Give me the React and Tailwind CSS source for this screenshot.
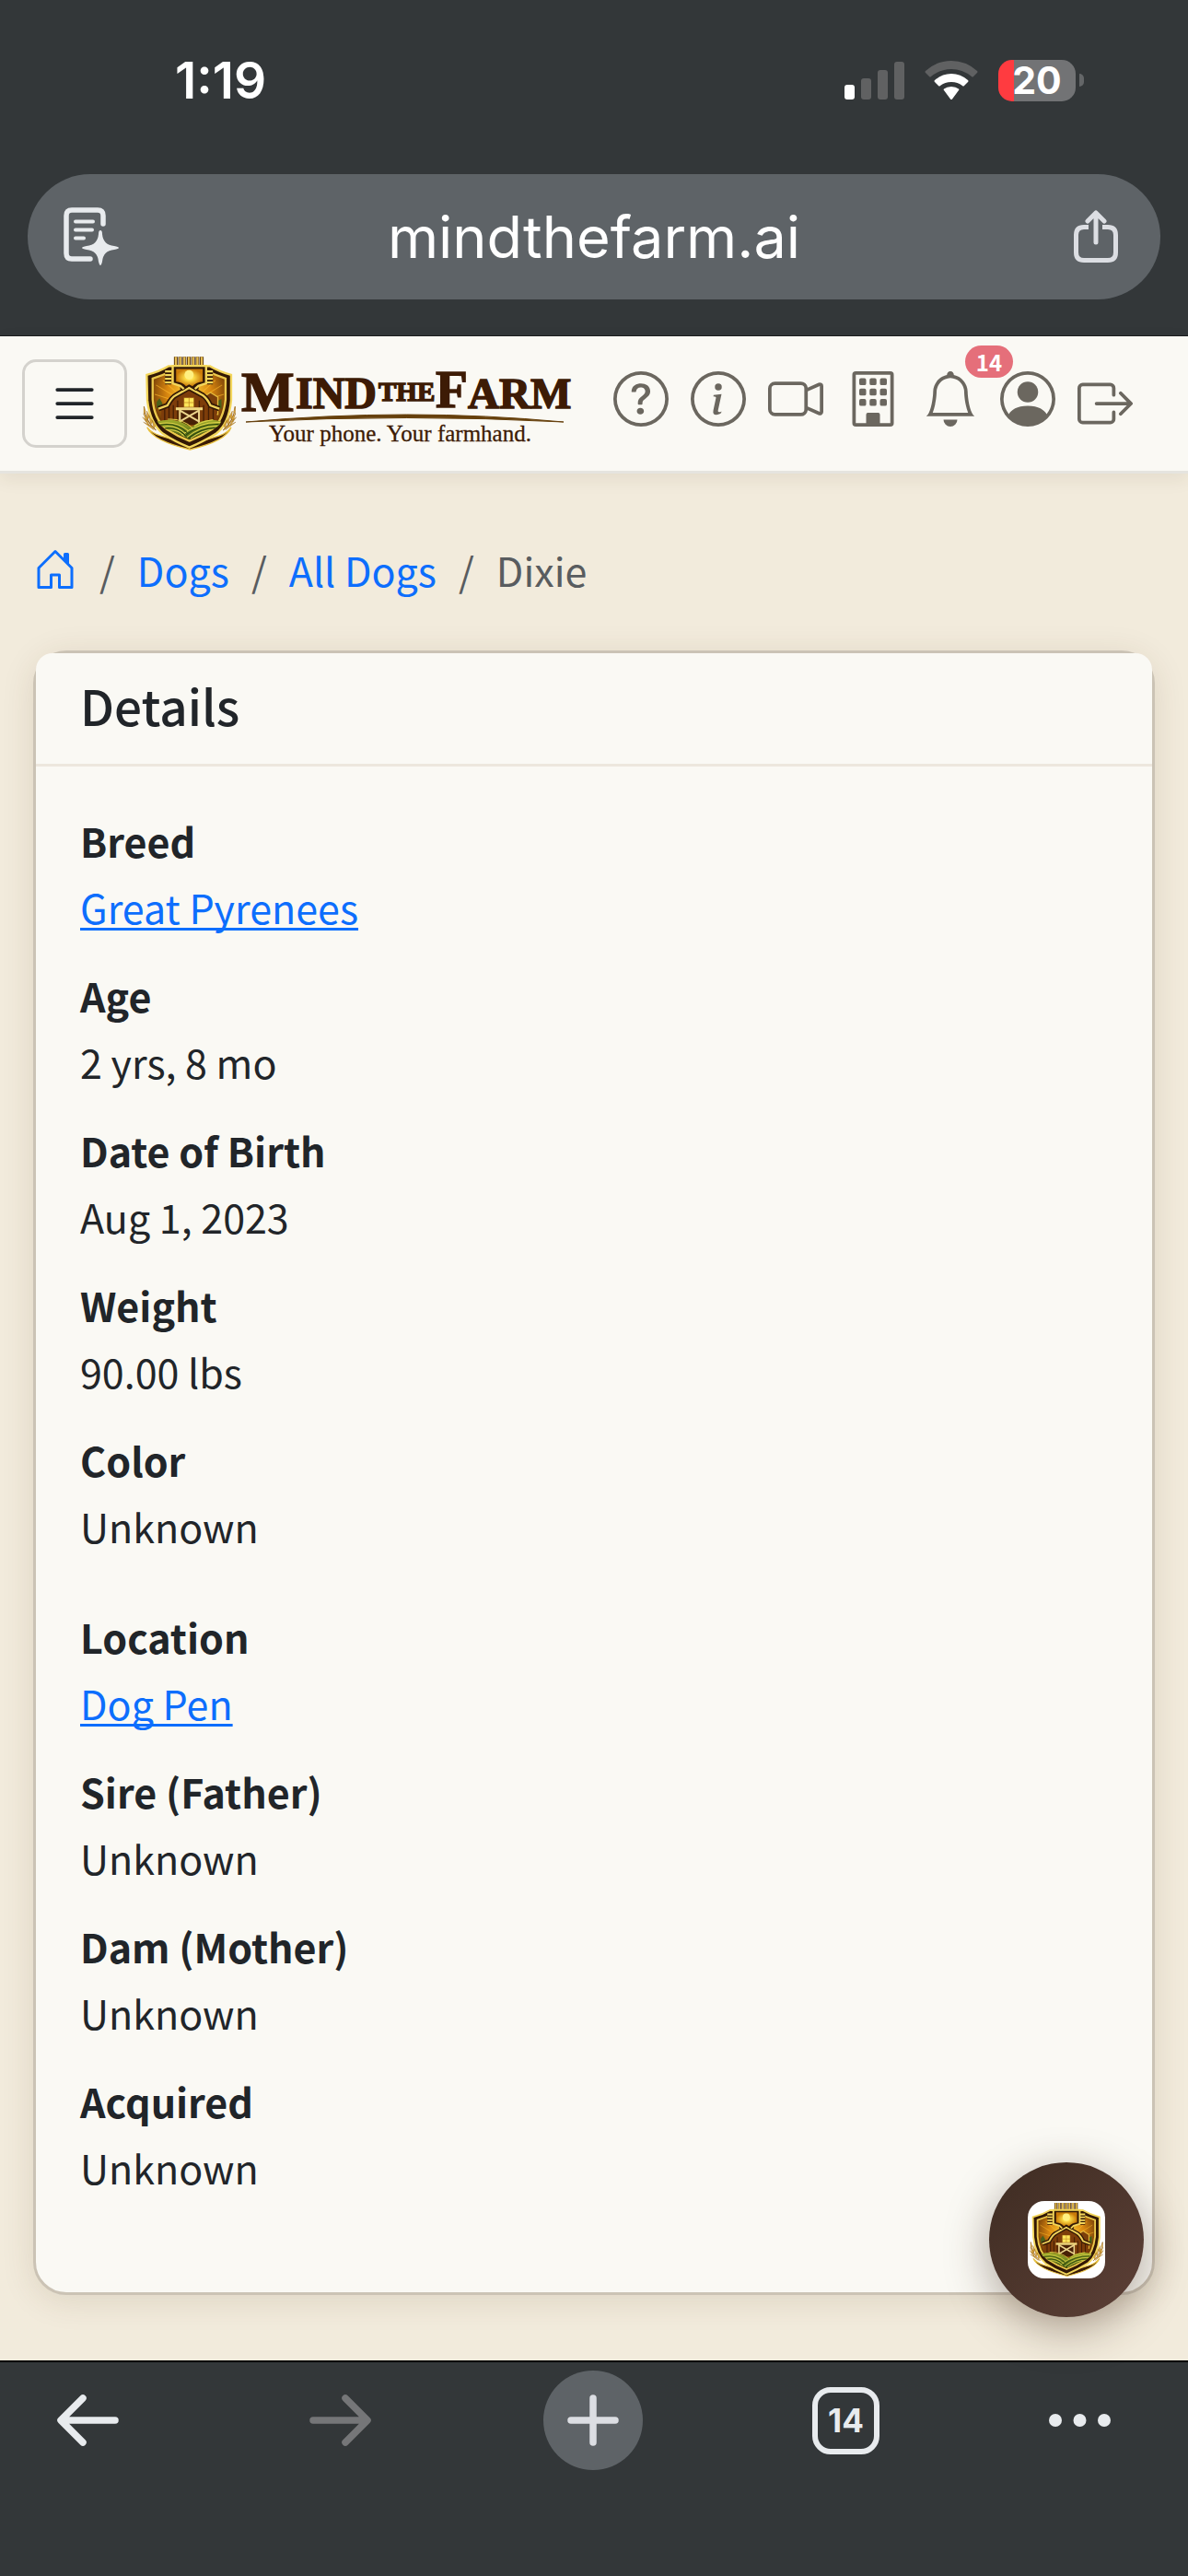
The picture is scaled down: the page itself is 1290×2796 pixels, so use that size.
import React from 'react'
import {
  BsBell,
  BsBoxArrowRight,
  BsBuilding,
  BsCameraVideo,
  BsHouseDoor,
  BsInfoCircle,
  BsList,
  BsPersonCircle,
  BsQuestionCircle,
} from 'react-icons/bs'

const profile = [
  { label: 'Breed', value: 'Great Pyrenees', href: '#breed' },
  { label: 'Age', value: '2 yrs, 8 mo' },
  { label: 'Date of Birth', value: 'Aug 1, 2023' },
  { label: 'Weight', value: '90.00 lbs' },
  { label: 'Color', value: 'Unknown' },
]

const lineage = [
  { label: 'Location', value: 'Dog Pen', href: '#location' },
  { label: 'Sire (Father)', value: 'Unknown' },
  { label: 'Dam (Mother)', value: 'Unknown' },
  { label: 'Acquired', value: 'Unknown' },
]

const navLinks = [
  { label: 'Help', icon: BsQuestionCircle },
  { label: 'About', icon: BsInfoCircle },
  { label: 'Cameras', icon: BsCameraVideo },
  { label: 'Buildings', icon: BsBuilding },
  { label: 'Notifications', icon: BsBell, badge: 14 },
  { label: 'Account', icon: BsPersonCircle },
]

export default function App() {
  return (
    <div className="flex min-h-screen flex-col bg-[#f2ebdc] font-['Noto_Sans_CJK_SC',sans-serif] text-[#212529]">
      <BrowserTop />
      <SiteHeader />
      <main className="flex-1 px-9 pt-[68px] pb-[71px]">
        <Breadcrumb />
        <section className="rounded-[36px] border-3 border-[#cbc3b5] bg-[#faf9f4] shadow-[0_6px_36px_rgba(70,50,20,0.12)]">
          <h1 className="rounded-t-[18px] border-b-3 border-[#ede7dd] bg-[#faf9f4] px-12 pt-5 pb-7 text-[53px] leading-[72px] font-medium">
            Details
          </h1>
          <div className="flex flex-col gap-6 px-12 pt-11 pb-[76px]">
            <DetailList items={profile} />
            <DetailList items={lineage} />
          </div>
        </section>
      </main>
      <BrowserBottom />
      <button
        aria-label="Open assistant"
        className="fixed right-12 bottom-[281px] flex size-[168px] items-center justify-center rounded-full bg-linear-135 from-[#3e2c22] to-[#5d4037] shadow-[0_12px_48px_rgba(62,39,25,0.4)]"
      >
        <span className="flex size-[84px] items-center justify-center rounded-[18px] bg-white">
          <Shield id="fab" className="size-[82px]" />
        </span>
      </button>
    </div>
  )
}

function BrowserTop() {
  return (
    <div className="border-b border-[#1a1c1d] bg-[#333739] pt-16 pb-[39px] font-['Inter',sans-serif] text-white">
      <div className="flex h-[46px] items-center pr-[113px] pl-[190px]">
        <span className="flex-1 text-[55px] leading-none font-semibold">1:19</span>
        <div className="flex items-center gap-[22px]">
          <svg viewBox="0 0 65 45" className="h-[45px] w-[65px]" fill="#606162">
            <rect x="0" y="27" width="11" height="16" rx="3" fill="#fff" />
            <rect x="18" y="20" width="11" height="23" rx="3" />
            <rect x="36" y="11" width="11" height="32" rx="3" />
            <rect x="54" y="2" width="11" height="41" rx="3" />
          </svg>
          <svg viewBox="0 0 58 45" className="h-[45px] w-[58px]">
            <path d="M1 14Q0 13 1 12Q13 1 29 1T57 12Q58 13 57 14L53 18Q52 19 51 18Q41 10 29 10T7 18Q6 19 5 18Z" fill="#606162" />
            <path d="M11 24Q10 23 11 22Q19 15 29 15T47 22Q48 23 47 24L43 28Q42 29 41 28Q36 24 29 24T17 28Q16 29 15 28Z" fill="#fff" />
            <path d="M21 33Q20 32 21 31.500Q24 29 29 29T37 31.500Q38 32 37 33L30 42.500Q29 43.500 28 42.500Z" fill="#fff" />
          </svg>
          <div className="flex items-center gap-1">
            <span className="flex h-[45px] w-[84px] items-center justify-center rounded-[15px] bg-linear-to-r from-[#ff3b40] from-[17px] to-[#727375] to-[17px] text-[41px] leading-none font-bold">
              20
            </span>
            <span className="h-3.5 w-[5px] rounded-r-full bg-[#646668]" />
          </div>
        </div>
      </div>
      <div className="mx-[30px] mt-[79px] flex h-[136px] items-center rounded-full bg-[#5e6367] px-[39px]">
        <button aria-label="Page tools">
          <svg viewBox="0 0 60 64" className="h-16 w-[60px]" fill="none" stroke="#e8ebee" strokeLinecap="round">
            <path d="M43 18V9Q43 3 37 3H9Q3 3 3 9V50Q3 56 9 56H29" strokeWidth="5.500" />
            <path d="M13 15.500H32M13 24.500H31M13 33.500H22" strokeWidth="4" />
            <path d="M40 25Q42 25 42 29Q43 41 55 42Q60 43 60 44T55 46Q43 47 42 59Q41 63 40 63T38 59Q37 47 25 46Q20 45 20 44T25 42Q37 41 38 29Q38 25 40 25Z" fill="#e8ebee" stroke="none" />
          </svg>
        </button>
        <input
          aria-label="Address"
          readOnly
          defaultValue="mindthefarm.ai"
          className="min-w-0 flex-1 bg-transparent text-center text-[63px] leading-[80px] outline-none"
        />
        <button aria-label="Share">
          <svg viewBox="0 0 60 58" className="h-[58px] w-[60px]" fill="none" stroke="#dcdee3" strokeWidth="5">
            <path d="M21 18.500H16Q7.500 18.500 7.500 27V46Q7.500 54.500 16 54.500H42Q50.500 54.500 50.500 46V27Q50.500 18.500 42 18.500H36" />
            <path d="M29 35V4M20 12L29 3L38 12" strokeLinecap="round" strokeLinejoin="round" />
          </svg>
        </button>
      </div>
    </div>
  )
}

function SiteHeader() {
  return (
    <header className="flex h-[149px] items-center gap-4 border-b-3 border-[#e5e4df] bg-[#faf9f4] pr-[60px] pl-6 shadow-[0_6px_18px_rgba(70,50,20,0.08)]">
      <button
        aria-label="Toggle menu"
        className="flex h-24 w-[114px] items-center justify-center rounded-[15px] border-3 border-[#d4d2cd] text-[60px]"
      >
        <BsList />
      </button>
      <a href="#home" aria-label="Mind the Farm" className="flex items-center gap-1">
        <Shield id="brand" className="h-[104px] w-[103px]" />
        <Wordmark />
      </a>
      <nav className="ml-auto flex items-center gap-6 text-[60px] text-[#6b675f]">
        <ul className="flex gap-6 pb-2.5">
          {navLinks.map(({ label, icon: Icon, badge }) => (
            <li key={label} className="relative">
              <a href="#nav" aria-label={label}>
                <Icon />
              </a>
              {badge && (
                <span className="absolute -top-7 left-[46px] flex h-[35px] w-[52px] items-center justify-center rounded-full bg-[#e56f7a] text-[24px] leading-none font-bold text-white">
                  {badge}
                </span>
              )}
            </li>
          ))}
        </ul>
        <button aria-label="Log out">
          <BsBoxArrowRight />
        </button>
      </nav>
    </header>
  )
}

function Breadcrumb() {
  return (
    <nav aria-label="Breadcrumb" className="mb-[52px]">
      <ol className="flex items-center gap-6 text-[43px] leading-[72px] text-[#595c5f]">
        <li className="text-[48px] text-[#0d6efd]">
          <a href="#home" aria-label="Home">
            <BsHouseDoor />
          </a>
        </li>
        <li aria-hidden="true">/</li>
        <li>
          <a href="#dogs" className="text-[#0d6efd]">Dogs</a>
        </li>
        <li aria-hidden="true">/</li>
        <li>
          <a href="#all-dogs" className="text-[#0d6efd]">All Dogs</a>
        </li>
        <li aria-hidden="true">/</li>
        <li>Dixie</li>
      </ol>
    </nav>
  )
}

function DetailList({ items }) {
  return (
    <dl className="text-[43px] leading-[72px]">
      {items.map(({ label, value, href }) => (
        <div key={label} className="mb-6">
          <dt className="font-bold">{label}</dt>
          <dd>
            {href ? (
              <a href={href} className="text-[#0d6efd] underline decoration-3 underline-offset-4 [text-decoration-skip-ink:none]">
                {value}
              </a>
            ) : (
              value
            )}
          </dd>
        </div>
      ))}
    </dl>
  )
}

function BrowserBottom() {
  return (
    <div className="flex h-[234px] items-start justify-between border-t-2 border-black bg-[#333739] pt-[9px] pr-[84px] pl-[41px] font-['Inter',sans-serif] text-[#e8ebee]">
      <button aria-label="Back" className="flex size-[108px] items-center justify-center">
        <BackArrow />
      </button>
      <button aria-label="Forward" className="flex size-[108px] items-center justify-center text-[#757678]">
        <BackArrow className="rotate-180" />
      </button>
      <button aria-label="New tab" className="flex size-[108px] items-center justify-center rounded-full bg-[#5e6367] text-[#dcdee3]">
        <svg viewBox="0 0 56 56" className="size-14" stroke="currentColor" strokeWidth="7.500" strokeLinecap="round">
          <path d="M28 4V52M4 28H52" />
        </svg>
      </button>
      <button aria-label="Show tabs" className="flex size-[108px] items-center justify-center">
        <span className="flex size-[73px] items-center justify-center rounded-[20px] border-[6px] border-current text-[35px] leading-none font-bold">
          14
        </span>
      </button>
      <button aria-label="Menu" className="flex h-[108px] w-[67px] items-center">
        <svg viewBox="0 0 67 14" className="w-full" fill="currentColor">
          <circle cx="7" cy="7" r="7" />
          <circle cx="33.500" cy="7" r="7" />
          <circle cx="60" cy="7" r="7" />
        </svg>
      </button>
    </div>
  )
}

function BackArrow({ className = '' }) {
  return (
    <svg viewBox="0 0 67 56" className={`h-14 w-[67px] ${className}`} fill="none" stroke="currentColor" strokeWidth="7.500" strokeLinecap="round" strokeLinejoin="round">
      <path d="M28 4L4 28L28 52M5 28H63" />
    </svg>
  )
}

function Wordmark() {
  return (
    <svg viewBox="0 0 360 104" className="h-[104px] w-[360px] font-['Liberation_Serif',serif]" fill="#3d1b05">
      <g fontWeight="700" stroke="#3d1b05" strokeWidth="1.500">
        <text x="1" y="60" fontSize="61">M</text>
        <text x="60" y="57" fontSize="48">IND</text>
        <text x="150" y="49" fontSize="29">THE</text>
        <text x="212" y="56" fontSize="57">F</text>
        <text x="247" y="57" fontSize="47">ARM</text>
      </g>
      <path d="M6 72Q183 56 351 72Q183 63 6 72Z" fill="#66400c" stroke="#66400c" strokeWidth="1" />
      <text x="31" y="93" fontSize="25" stroke="#3d1b05" strokeWidth="0.300">Your phone. Your farmhand.</text>
    </svg>
  )
}

// Barn crest with the circuit chip on top
function Shield({ id, className }) {
  return (
    <svg viewBox="45 50 305 310" className={className} fill="none">
      <defs>
        <radialGradient id={`${id}-sky`} cx="50%" cy="30%" r="60%">
          <stop offset="0" stopColor="#ffd83a" />
          <stop offset="0.5" stopColor="#d98710" />
          <stop offset="1" stopColor="#5c2c05" />
        </radialGradient>
        <radialGradient id={`${id}-sun`}>
          <stop offset="0" stopColor="#fffbc0" />
          <stop offset="0.3" stopColor="#ffe04a" />
          <stop offset="1" stopColor="#c97a08" />
        </radialGradient>
        <linearGradient id={`${id}-field`} x1="0" y1="0" x2="0" y2="1">
          <stop offset="0" stopColor="#a3ae2b" />
          <stop offset="1" stopColor="#3f5a12" />
        </linearGradient>
      </defs>
      <path d="M61 282Q80 326 200 354Q318 326 333 282Q318 302 295 309L200 338L104 309Q78 302 61 282Z" fill="#3a1b06" stroke="#e9c240" strokeWidth="4" />
      <path d="M60 112Q100 102 130 84H265Q295 102 333 112V195Q326 270 285 302Q240 330 198 347Q150 328 112 302Q70 268 62 195Z" fill="#321805" stroke="#f3d65a" strokeWidth="7" />
      <path d="M79 124Q112 114 140 100H255Q285 114 315 124V192Q308 257 274 286Q238 310 198 326Q158 310 122 286Q84 255 79 192Z" fill={`url(#${id}-sky)`} stroke="#ecc94b" strokeWidth="7" />
      <path d="M90 145L165 190M86 175L150 195M112 130L160 172M304 145L230 190M309 175L245 195M282 130L235 172" stroke="#ffbd2b" strokeWidth="3" opacity="0.6" />
      <path d="M92 200L101 188L110 203L114 220H92ZM285 215L292 195L302 190V222Z" fill="#4b611a" />
      <path d="M243 184L266 169L290 184V240H243Z" fill="#7c400b" stroke="#e3b83a" strokeWidth="4" />
      <path d="M107 221L132 190L197 158L262 190L287 221V272H107Z" fill="#7d3d0a" />
      <path d="M118 222V265M132 217V265M146 210V265M160 195V265M230 195V265M244 210V265M260 217V265M275 222V265" stroke="#451f05" strokeWidth="4" />
      <path d="M98 222L127 211Q141 185 153 179L197 154L242 179Q255 188 266 211L295 222" stroke="#321805" strokeWidth="17" />
      <path d="M98 222L127 211Q141 185 153 179L197 154L242 179Q255 188 266 211L295 222" stroke="#f0d25a" strokeWidth="7" />
      <path d="M180 186H213V217H180Z" fill="#ffe65a" stroke="#8b4d0a" strokeWidth="2" />
      <path d="M197 186V217M180 202H213" stroke="#b77816" strokeWidth="2" />
      <path d="M165 224H231V274H165Z" fill="#472006" />
      <path d="M165 264L231 226M165 226L231 264M167 224V268M229 224V268" stroke="#ecd58c" strokeWidth="6" />
      <path d="M154 222H241" stroke="#f0d87f" strokeWidth="9" />
      <path d="M93 263Q155 246 203 282Q248 246 301 263Q294 282 272 288L198 321L124 287Q104 277 93 263Z" fill={`url(#${id}-field)`} />
      <path d="M99 270Q155 260 195 293M112 280Q155 272 188 305M129 292Q158 286 183 312M128 256Q174 253 208 284M298 266Q230 264 173 307M288 278Q236 276 190 314M272 289Q240 290 202 317M275 257Q236 263 214 278" stroke="#e0d34a" strokeWidth="3" />
      <path d="M105 274Q155 265 191 299M119 286Q153 278 185 308M293 272Q233 270 181 310M280 284Q238 284 197 316" stroke="#28440d" strokeWidth="3" />
      <path d="M154 54V82M168 54V82M182 54V82M196 54V82M210 54V82M224 54V82M238 54V82" stroke="#4a2808" strokeWidth="12" />
      <path d="M154 54V82M168 54V82M182 54V82M196 54V82M210 54V82M224 54V82M238 54V82" stroke="#e4bd50" strokeWidth="7" />
      <path d="M119 101H140M119 113H140M119 125H140M119 137H140M254 101H274M254 113H274M254 125H274M254 137H274" stroke="#321805" strokeWidth="13" />
      <path d="M119 101H140M119 113H140M119 125H140M119 137H140M254 101H274M254 113H274M254 125H274M254 137H274" stroke="#f3d65a" strokeWidth="7" />
      <path d="M143 83H252V140L228 147V158L218 163L197 150L176 163L168 158V147L143 140Z" fill="#321805" />
      <path d="M180 158L169 148L144 140V83H252V140L227 148L216 158" stroke="#f3d65a" strokeWidth="7" />
      <path d="M155 93H241V134Q220 136 208 149L197 143L187 149Q176 136 155 134Z" fill={`url(#${id}-sun)`} />
      <circle cx="197" cy="112" r="15" fill="#fff080" />
      <path d="M51 215Q55 262 90 292M346 215Q342 262 307 292" stroke="#9a671a" strokeWidth="3" />
      <path
        d="M51 214L56 232L50 240ZM50 238L63 252L58 265ZM60 229L70 247L62 258ZM46 249L64 263L67 276ZM67 244L79 263L73 274ZM49 265L73 276L82 290ZM77 258L88 276L83 288ZM346 214L341 232L347 240ZM347 238L334 252L339 265ZM337 229L327 247L335 258ZM350 249L333 263L330 276ZM330 244L318 263L324 274ZM348 265L324 276L315 290ZM320 258L309 276L314 288Z"
        fill="#dba83c"
        stroke="#8d5a14"
        strokeWidth="1"
      />
    </svg>
  )
}
